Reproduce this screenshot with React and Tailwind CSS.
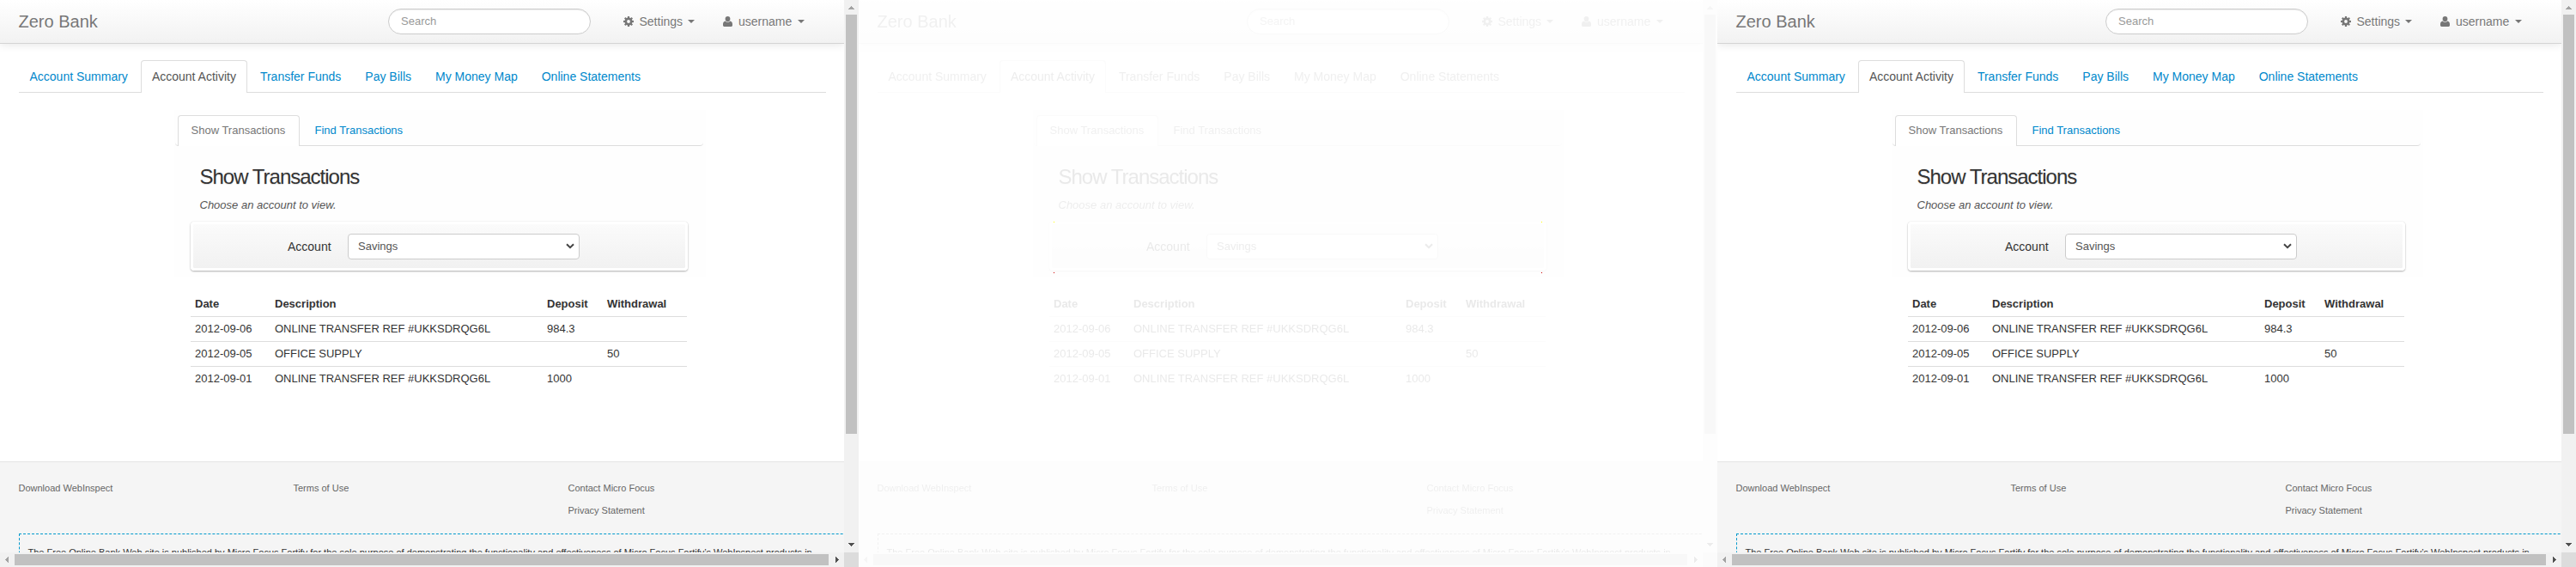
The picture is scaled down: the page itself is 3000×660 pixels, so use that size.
const tabs = ["Account Summary", "Account Activity", "Transfer Funds", "Pay Bills", "My Money Map", "Online Statements"];

const rows = [
  ["2012-09-06", "ONLINE TRANSFER REF #UKKSDRQG6L", "984.3", ""],
  ["2012-09-05", "OFFICE SUPPLY", "", "50"],
  ["2012-09-01", "ONLINE TRANSFER REF #UKKSDRQG6L", "1000", ""],
];

const teeth = [0, 45, 90, 135, 180, 225, 270, 315];

function Gear() {
  return (
    <svg className="h-3 w-3" viewBox="0 0 12 12">
      <circle cx="6" cy="6" r="3.2" fill="none" stroke="#777" strokeWidth="2.6" />
      {teeth.map((a) => (
        <rect key={a} x="4.9" y="0" width="2.2" height="2.4" fill="#777" transform={`rotate(${a} 6 6)`} />
      ))}
    </svg>
  );
}

function Person() {
  return (
    <svg className="h-3 w-[11px]" viewBox="0 0 11 12" fill="#777">
      <ellipse cx="5.5" cy="3.1" rx="2.9" ry="3.1" />
      <path d="M2.6 5.4C1 5.9 0 7.2 0 9v1.6Q0 12 1.4 12h8.2Q11 12 11 10.600V9c0-1.800-1-3.100-2.600-3.600C7.600 6.300 6.600 6.800 5.500 6.800S3.400 6.300 2.600 5.400z" />
    </svg>
  );
}

function Caret() {
  return <span className="h-0 w-0 border-x-4 border-t-4 border-x-transparent border-t-[#777]" />;
}

function Arrow({ points, color }) {
  return (
    <svg className="h-[17px] w-[17px] shrink-0" viewBox="0 0 17 17" shapeRendering="crispEdges">
      <polygon points={points} fill={color} />
    </svg>
  );
}

function Navbar() {
  return (
    <header className="flex h-[51px] shrink-0 items-start border-b border-[#d4d4d4] bg-linear-to-b from-white to-[#f2f2f2] pl-[21.5px] text-[#777] shadow-[0_1px_10px_rgba(0,0,0,0.1)]">
      <div className="mt-[15px] w-[430.5px] text-[20px] leading-5 [text-shadow:0_1px_0_#fff]">Zero Bank</div>
      <div className="mt-2.5 h-[30px] w-[236px] rounded-full border border-[#ccc] bg-white pl-3.5 text-[13px] leading-[28px] text-[#999] shadow-[inset_0_1px_1px_rgba(0,0,0,0.075)]">
        Search
      </div>
      <div className="mt-[15px] ml-[38px] flex h-5 items-center text-sm leading-5 [text-shadow:0_1px_0_#fff]">
        <Gear />
        <span className="ml-[6.5px] w-[51px]">Settings</span>
        <span className="ml-[5.5px] flex"><Caret /></span>
      </div>
      <div className="mt-[15px] ml-[33px] flex h-5 items-center text-sm leading-5 [text-shadow:0_1px_0_#fff]">
        <Person />
        <span className="ml-[7px] w-[63px]">username</span>
        <span className="ml-[6px] flex"><Caret /></span>
      </div>
    </header>
  );
}

function BankPage() {
  return (
    <div className="grid h-[660px] w-[1000px] grid-cols-[983px_17px] grid-rows-[643px_17px] overflow-hidden bg-white">
      <div className="flex h-[643px] flex-col overflow-hidden">
        <Navbar />
        <nav className="mt-[19px] ml-[21.5px] flex h-[38px] w-[940px] shrink-0 gap-0.5 border-b border-[#ddd] text-sm leading-5 text-[#0088cc]">
          {tabs.map((t, i) => (
            <div
              key={t}
              className={
                i === 1
                  ? "h-[38px] rounded-t border border-b-0 border-[#ddd] bg-white px-3 pt-2 text-[#555]"
                  : "border border-transparent px-3 pt-2"
              }
            >
              {t}
            </div>
          ))}
        </nav>
        <main className="mt-5 ml-[202.5px] h-[409px] w-[619px] shrink-0">
          <section className="h-[195px] bg-[#fefefe] px-px pt-1.5">
            <div className="flex h-9 w-[615px] gap-0.5 rounded-b border-b border-[#ddd] pl-[3px] text-[13px] leading-5">
              <div className="h-9 w-[142px] rounded-t border border-b-0 border-[#ddd] bg-white pt-[7px] pl-[15px] text-[#777]">
                Show Transactions
              </div>
              <div className="pt-2 pl-4 text-[#0088cc]">Find Transactions</div>
            </div>
            <h2 className="mt-4 ml-[29px] text-[24px] leading-10 tracking-[-1px] text-[#333] [text-shadow:0_1px_1px_rgba(0,0,0,0.12)]">
              Show Transactions
            </h2>
            <p className="mt-[3px] ml-[29px] text-[13px] leading-5 text-[#555] italic">Choose an account to view.</p>
            <div className="mt-[9px] ml-[18.5px] flex h-[57px] w-[579px] items-center rounded border-[3px] border-white bg-linear-to-b from-[#fbfbfb] to-[#f1f1f1] bg-clip-padding shadow-[0_0_1px_rgba(0,0,0,0.2),0_1px_2px_rgba(0,0,0,0.3)]">
              <span className="ml-[110px] w-[70px] text-sm leading-5 text-[#333]">Account</span>
              <div className="flex h-[30px] w-[270px] items-center justify-between rounded border border-[#ccc] bg-white pr-[5px] pl-[11px] text-[13px] leading-5 text-[#555]">
                Savings
                <svg className="h-[7px] w-[10px]" viewBox="0 0 10 7" fill="none" stroke="#444" strokeWidth="2">
                  <path d="M1 1.2 5 5.2 9 1.2" />
                </svg>
              </div>
            </div>
          </section>
          <table className="mt-4 ml-[19.5px] w-[578px] table-fixed border-collapse text-left text-[13px] leading-5 text-[#333]">
            <colgroup>
              <col className="w-[93px]" />
              <col className="w-[317px]" />
              <col className="w-[70px]" />
              <col className="w-[98px]" />
            </colgroup>
            <thead>
              <tr className="h-[29px] align-bottom">
                {["Date", "Description", "Deposit", "Withdrawal"].map((h) => (
                  <th key={h} className="px-[5px] py-1 font-bold">{h}</th>
                ))}
              </tr>
            </thead>
            <tbody>
              {rows.map((r) => (
                <tr key={r[0]} className="h-[29px] border-t border-[#ddd]">
                  {r.map((c, i) => (
                    <td key={i} className="px-[5px] py-1 whitespace-nowrap">{c}</td>
                  ))}
                </tr>
              ))}
            </tbody>
          </table>
        </main>
        <footer className="h-[160px] shrink-0 border-t border-[#e5e5e5] bg-[#f5f5f5] pl-[21.5px] text-[11px] text-[#666]">
          <div className="mt-[17px] grid h-[66px] grid-cols-[320px_320px_1fr] leading-[26px]">
            <div>Download WebInspect</div>
            <div>Terms of Use</div>
            <div>
              <div>Contact Micro Focus</div>
              <div>Privacy Statement</div>
            </div>
          </div>
          <div className="h-20 w-[1140px] border border-dashed border-[#0099cc] pt-[11px] pl-2.5 leading-5 whitespace-nowrap text-[#333]">
            The Free Online Bank Web site is published by Micro Focus Fortify for the sole purpose of demonstrating the functionality and effectiveness of Micro Focus Fortify’s WebInspect products in
          </div>
        </footer>
      </div>
      <div className="flex flex-col items-center bg-[#f1f1f1]">
        <Arrow points="5,11 12,11 8.5,7" color="#a3a3a3" />
        <div className="h-[488px] w-[13px] bg-[#c1c1c1]" />
        <div className="mt-auto flex"><Arrow points="5,6 12,6 8.5,10" color="#505050" /></div>
      </div>
      <div className="flex items-center bg-[#f1f1f1]">
        <Arrow points="10,5 10,12 6,8.5" color="#a3a3a3" />
        <div className="h-[13px] w-[448px] bg-[#c1c1c1] grow" />
        <div className="ml-px flex"><Arrow points="7,5 7,12 11,8.5" color="#505050" /></div>
      </div>
      <div className="bg-[#dcdcdc]" />
    </div>
  );
}

export default function App() {
  return (
    <div className="flex h-[660px] w-[3000px] overflow-hidden bg-white font-['Liberation_Sans',Arial,sans-serif]">
      <BankPage />
      <div className="relative">
        <div className="opacity-10 grayscale">
          <BankPage />
        </div>
        {/* markers for the pixels that differ between the two captures */}
        <span className="absolute top-[258px] left-[227px] h-px w-px bg-[#ffff00]" />
        <span className="absolute top-[258px] left-[795px] h-px w-px bg-[#ffff00]" />
        <span className="absolute top-[317px] left-[227px] h-px w-px bg-[#cc0000]" />
        <span className="absolute top-[317px] left-[795px] h-px w-px bg-[#cc0000]" />
      </div>
      <BankPage />
    </div>
  );
}
